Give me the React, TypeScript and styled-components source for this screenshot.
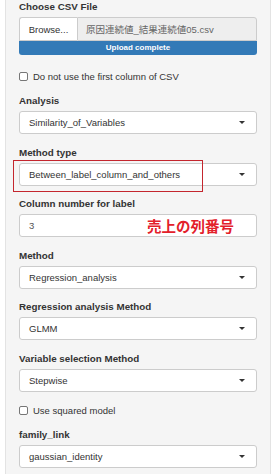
import React from 'react';
import styled, { createGlobalStyle } from 'styled-components';

const GlobalStyle = createGlobalStyle`
  html, body {
    margin: 0;
    padding: 0;
    background: #fff;
  }
  body {
    font-family: "Liberation Sans", Arial, "Noto Sans CJK JP", sans-serif;
    color: #333;
  }
`;

interface SelectProps {
  label: string;
  value: string;
  highlight?: boolean;
}

const SelectGroup: React.FC<SelectProps> = ({ label, value, highlight }) => (
  <Group>
    <Label>{label}</Label>
    <ControlWrap>
      {highlight && <Highlight />}
      <SelectBox>
        <span>{value}</span>
        <Caret />
      </SelectBox>
    </ControlWrap>
  </Group>
);

export default function App() {
  return (
    <>
      <GlobalStyle />
      <Panel>
        <Group>
          <Label>Choose CSV File</Label>
          <FileRow>
            <BrowseButton>Browse...</BrowseButton>
            <FileName>原因連続値_結果連続値05.csv</FileName>
          </FileRow>
          <Progress>Upload complete</Progress>
        </Group>

        <CheckRow top={14} bottom={11}>
          <Box />
          <span>Do not use the first column of CSV</span>
        </CheckRow>

        <SelectGroup label="Analysis" value="Similarity_of_Variables" />
        <SelectGroup label="Method type" value="Between_label_column_and_others" highlight />

        <Group>
          <Label>Column number for label</Label>
          <ControlWrap>
            <TextInput>3</TextInput>
            <Note>売上の列番号</Note>
          </ControlWrap>
        </Group>

        <SelectGroup label="Method" value="Regression_analysis" />
        <SelectGroup label="Regression analysis Method" value="GLMM" />
        <Group last>
          <Label>Variable selection Method</Label>
          <SelectBox>
            <span>Stepwise</span>
            <Caret />
          </SelectBox>
        </Group>

        <CheckRow top={12} bottom={10}>
          <Box />
          <span>Use squared model</span>
        </CheckRow>

        <SelectGroup label="family_link" value="gaussian_identity" />
      </Panel>
    </>
  );
}

const Panel = styled.div`
  margin: 0 6px 0 5px;
  padding: 0 13px 10px 13px;
  background: #f5f5f5;
  border: 1px solid #e3e3e3;
  border-top: none;
  font-size: 9.5px;
`;

const Group = styled.div<{ last?: boolean }>`
  margin-bottom: ${({ last }) => (last ? '0' : '11.6px')};
`;

const Label = styled.div`
  font-weight: bold;
  font-size: 9.8px;
  line-height: 13px;
  margin-bottom: 4px;
  color: #333;
`;

const ControlWrap = styled.div`
  position: relative;
`;

const SelectBox = styled.div`
  display: flex;
  align-items: center;
  justify-content: space-between;
  box-sizing: border-box;
  height: 23px;
  padding: 0 11px 0 9px;
  background: #fff;
  border: 1px solid #ccc;
  border-radius: 3px;
  color: #333;
  font-size: 9.5px;
`;

const Caret = styled.span`
  width: 0;
  height: 0;
  border-top: 3.5px solid #333;
  border-left: 3.5px solid transparent;
  border-right: 3.5px solid transparent;
`;

const Highlight = styled.div`
  position: absolute;
  left: -6px;
  top: -3px;
  width: 190px;
  height: 32px;
  box-sizing: border-box;
  border: 1px solid #c4262e;
  pointer-events: none;
  z-index: 1;
`;

const TextInput = styled.div`
  display: flex;
  align-items: center;
  box-sizing: border-box;
  height: 23px;
  padding: 0 9px;
  background: #fff;
  border: 1px solid #ccc;
  border-radius: 3px;
  color: #555;
  font-size: 9.5px;
`;

const Note = styled.span`
  position: absolute;
  left: 128px;
  top: 50%;
  transform: translateY(-50%);
  font-family: "Noto Sans CJK JP", sans-serif;
  font-weight: bold;
  font-size: 14.5px;
  line-height: 1;
  color: #e3202a;
`;

const FileRow = styled.div`
  display: flex;
  height: 24px;
`;

const BrowseButton = styled.div`
  display: flex;
  align-items: center;
  justify-content: center;
  box-sizing: border-box;
  width: 58px;
  background: #fff;
  border: 1px solid #ccc;
  border-right: none;
  border-radius: 3px 0 0 0;
  color: #333;
  font-size: 9.5px;
`;

const FileName = styled.div`
  flex: 1;
  display: flex;
  align-items: center;
  box-sizing: border-box;
  padding-left: 8px;
  background: #eee;
  border: 1px solid #ccc;
  border-radius: 0 3px 0 0;
  color: #666;
  font-family: "Liberation Sans", Arial, "Noto Sans CJK JP", sans-serif;
  font-size: 9.5px;
`;

const Progress = styled.div`
  height: 14px;
  line-height: 14px;
  text-align: center;
  background: #337ab7;
  border-radius: 0 0 3px 3px;
  color: #fff;
  font-weight: bold;
  font-size: 8px;
`;

const CheckRow = styled.div<{ top: number; bottom: number }>`
  display: flex;
  align-items: center;
  gap: 5px;
  height: 14px;
  margin: ${({ top, bottom }) => `${top}px 0 ${bottom}px`};
  color: #333;
  font-size: 9.5px;
`;

const Box = styled.span`
  box-sizing: border-box;
  width: 9px;
  height: 9px;
  background: #fff;
  border: 1px solid #767676;
  border-radius: 2px;
`;
